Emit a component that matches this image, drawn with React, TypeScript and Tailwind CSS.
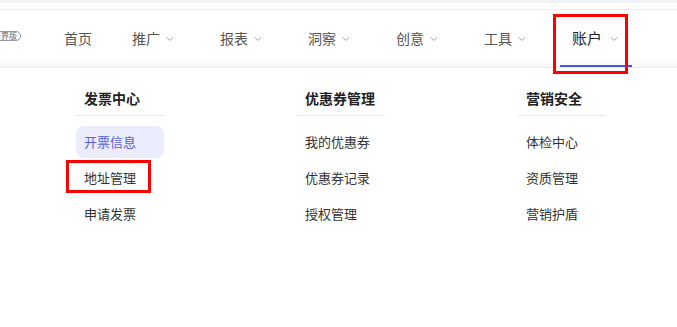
import { ChevronDown } from "lucide-react"

const navItems = [
  { label: "首页", chevron: false },
  { label: "推广", chevron: true },
  { label: "报表", chevron: true },
  { label: "洞察", chevron: true },
  { label: "创意", chevron: true },
  { label: "工具", chevron: true },
]

const columns = [
  { title: "发票中心", items: ["开票信息", "地址管理", "申请发票"] },
  { title: "优惠券管理", items: ["我的优惠券", "优惠券记录", "授权管理"] },
  { title: "营销安全", items: ["体检中心", "资质管理", "营销护盾"] },
]

export default function App() {
  return (
    <div
      className="w-[677px] h-[327px] overflow-hidden bg-white"
      style={{ fontFamily: '"Noto Sans CJK SC", "Noto Sans", sans-serif' }}
    >
      {/* top strip */}
      <div className="h-[3px] bg-[#f1f2f5]" />
      <div className="h-[6px] bg-white" />
      <div className="h-px bg-[#ececef]" />

      {/* nav */}
      <div className="relative h-[57px] flex items-center bg-gradient-to-b from-white from-[85%] to-[#f6f6f7]">
        <div className="w-[64px] h-full flex items-center overflow-hidden">
          <div className="-ml-[10px] -mt-[5px] h-[10px] pl-[2px] pr-[3px] rounded-full border border-[#999] flex items-center text-[8px] leading-none text-[#666] whitespace-nowrap">
            新界版
          </div>
        </div>
        {navItems.map((n, i) => (
          <div
            key={n.label}
            className={`${i === 0 ? "w-[68px]" : "w-[88px]"} flex items-center text-[14px] text-[#555]`}
          >
            <span>{n.label}</span>
            {n.chevron && <ChevronDown className="ml-[4px] w-[12px] h-[12px] text-[#888]" strokeWidth={1.6} />}
          </div>
        ))}
        <div className="relative w-[88px] h-full flex items-center">
          <span className="text-[15px] text-[#222]">账户</span>
          <ChevronDown className="ml-[6px] w-[12px] h-[12px] text-[#888]" strokeWidth={1.6} />
          <div className="absolute left-[-12px] w-[72px] bottom-0 h-[2px] bg-[#4a55e0]" />
          <div className="absolute left-[-19px] top-[4px] w-[75px] h-[60px] border-[3px] border-[#ff0000]" />
        </div>
      </div>
      <div className="h-px bg-[#ededf0]" />

      {/* dropdown */}
      <div className="flex gap-[133px] pl-[76px] pt-[20px]">
        {columns.map((c, ci) => (
          <div key={c.title} className="w-[88px]">
            <div className="px-2 h-[27px] text-[14px] font-bold text-[#222] leading-[20px]">{c.title}</div>
            <div className="h-px bg-[#e6e7eb]" />
            <div className="mt-[10px] flex flex-col gap-[4px]">
              {c.items.map((it, ii) => {
                const active = ci === 0 && ii === 0
                return (
                  <div
                    key={it}
                    className={
                      active
                        ? "relative h-[32px] px-2 flex items-center rounded-[8px] bg-[#ebedfd] text-[13px] text-[#5660e0]"
                        : "relative h-[32px] px-2 flex items-center text-[13px] text-[#333]"
                    }
                  >
                    {it}
                    {ci === 0 && ii === 1 && (
                      <div className="absolute left-[-10px] top-[-2px] w-[85px] h-[33px] border-[3px] border-[#ff0000]" />
                    )}
                  </div>
                )
              })}
            </div>
          </div>
        ))}
      </div>
    </div>
  )
}
